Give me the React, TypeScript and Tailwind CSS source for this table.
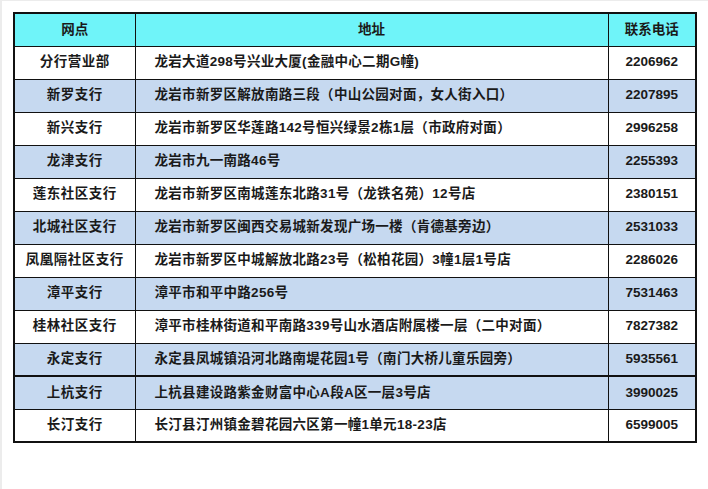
const rows: { name: string; addr: string; tel: string; blue: boolean; thick?: boolean }[] = [
  { name: "分行营业部", addr: "龙岩大道298号兴业大厦(金融中心二期G幢)", tel: "2206962", blue: false },
  { name: "新罗支行", addr: "龙岩市新罗区解放南路三段（中山公园对面，女人街入口）", tel: "2207895", blue: true },
  { name: "新兴支行", addr: "龙岩市新罗区华莲路142号恒兴绿景2栋1层（市政府对面）", tel: "2996258", blue: false },
  { name: "龙津支行", addr: "龙岩市九一南路46号", tel: "2255393", blue: true },
  { name: "莲东社区支行", addr: "龙岩市新罗区南城莲东北路31号（龙铁名苑）12号店", tel: "2380151", blue: false },
  { name: "北城社区支行", addr: "龙岩市新罗区闽西交易城新发现广场一楼（肯德基旁边）", tel: "2531033", blue: true },
  { name: "凤凰隔社区支行", addr: "龙岩市新罗区中城解放北路23号（松柏花园）3幢1层1号店", tel: "2286026", blue: false },
  { name: "漳平支行", addr: "漳平市和平中路256号", tel: "7531463", blue: true },
  { name: "桂林社区支行", addr: "漳平市桂林街道和平南路339号山水酒店附属楼一层（二中对面）", tel: "7827382", blue: false },
  { name: "永定支行", addr: "永定县凤城镇沿河北路南堤花园1号（南门大桥儿童乐园旁）", tel: "5935561", blue: true },
  { name: "上杭支行", addr: "上杭县建设路紫金财富中心A段A区一层3号店", tel: "3990025", blue: true, thick: true },
  { name: "长汀支行", addr: "长汀县汀州镇金碧花园六区第一幢1单元18-23店", tel: "6599005", blue: false },
]

export default function App() {
  return (
    <div
      className="w-[708px] h-[489px] bg-white border-l-2 border-t border-[#ececec] pt-[11px] pl-[11px]"
      style={{ fontFamily: '"Liberation Sans", "Noto Sans CJK SC", sans-serif' }}
    >
      <table className="table-fixed border-collapse border-2 border-[#111] w-[682px] text-[13.5px] font-bold text-[#1a1a1a]">
        <colgroup>
          <col className="w-[121px]" />
          <col className="w-[473px]" />
          <col className="w-[88px]" />
        </colgroup>
        <thead>
          <tr className="h-[33px] bg-[#6ff4f9]">
            <th className="border border-[#111] text-center font-bold">网点</th>
            <th className="border border-[#111] text-center font-bold">地址</th>
            <th className="border border-[#111] text-center font-bold">联系电话</th>
          </tr>
        </thead>
        <tbody>
          {rows.map((r) => (
            <tr
              key={r.name}
              className={`h-[33px] ${r.blue ? "bg-[#c6d9f0]" : "bg-white"} ${r.thick ? "border-t-2 border-t-[#111]" : ""}`}
            >
              <td className="border border-[#111] text-center whitespace-nowrap tracking-[0.5px]">{r.name}</td>
              <td className="border border-[#111] pl-[19px] whitespace-nowrap tracking-[0.3px]">{r.addr}</td>
              <td className="border border-[#111] text-center">{r.tel}</td>
            </tr>
          ))}
        </tbody>
      </table>
    </div>
  )
}
